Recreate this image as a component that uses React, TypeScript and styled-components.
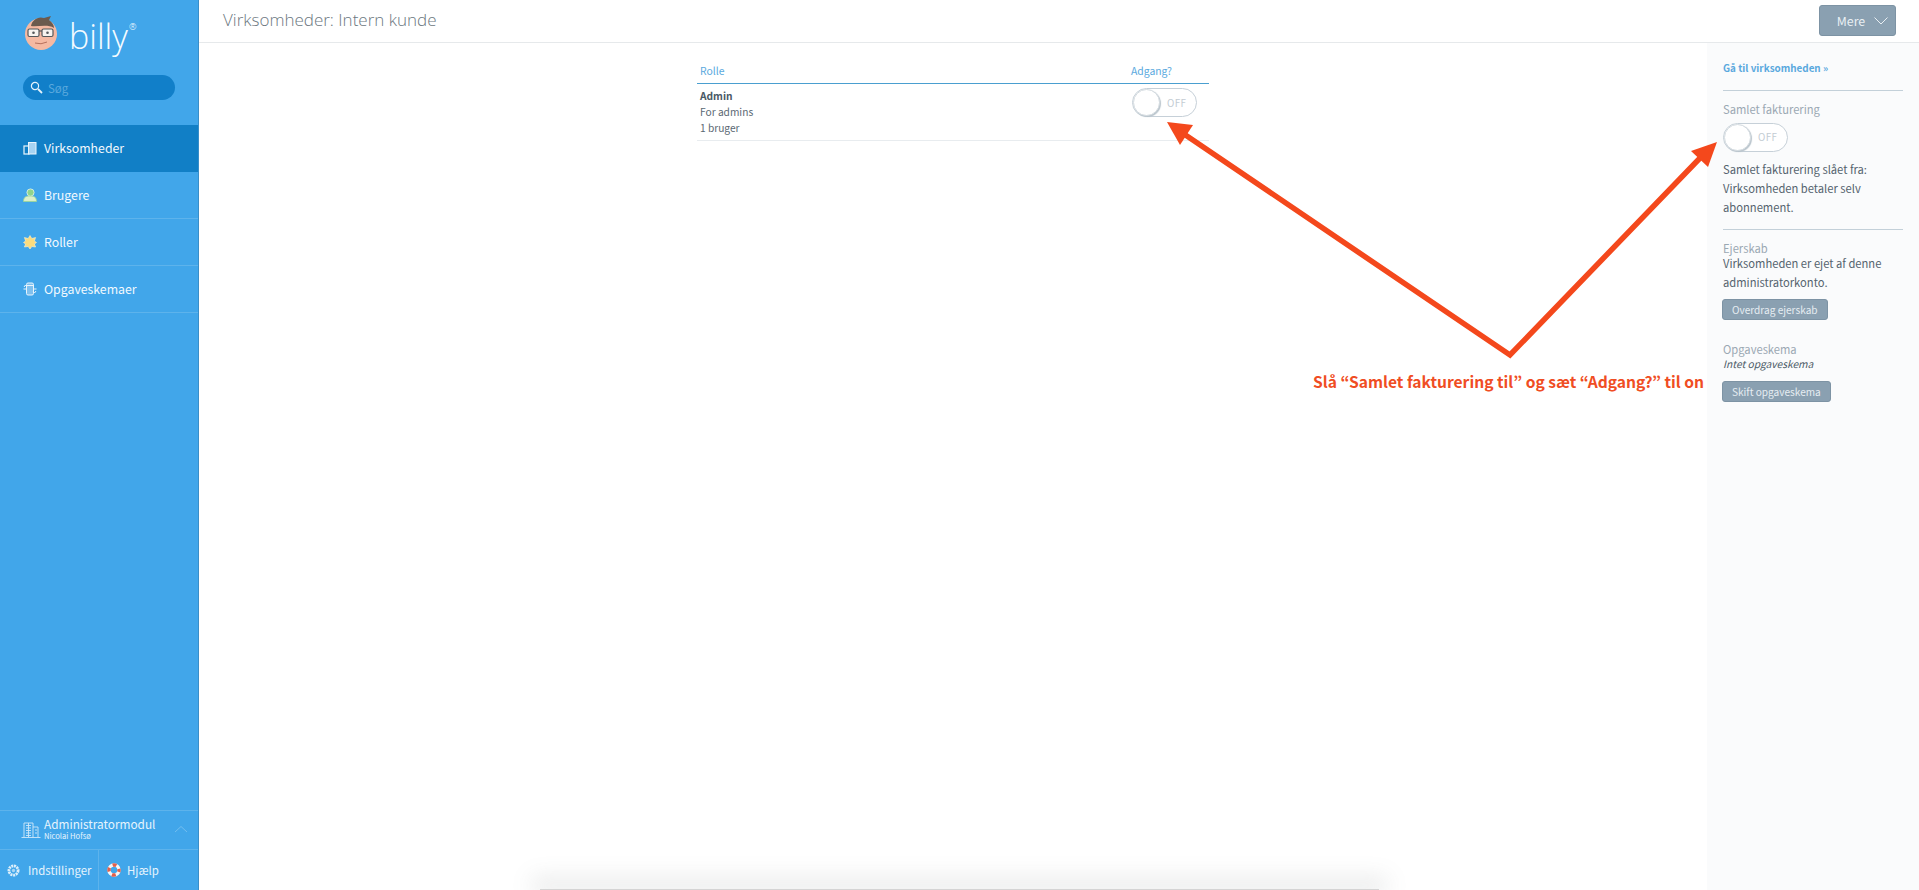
import styled, { createGlobalStyle } from "styled-components";
import { ReactNode } from "react";

const sans = `"Noto Sans CJK JP", "Open Sans", sans-serif`;

const GlobalStyle = createGlobalStyle`
  html, body {
    margin: 0;
    height: 100%;
    background: #fff;
    overflow: hidden;
  }
  body {
    font-family: ${sans};
    color: #4a5a66;
  }
  #root {
    height: 100%;
  }
`;

const Page = styled.div`
  position: relative;
  display: flex;
  height: 890px;
  overflow: hidden;
`;

/* Sidebar */
const Sidebar = styled.aside`
  display: flex;
  flex-direction: column;
  flex: 0 0 199px;
  box-sizing: border-box;
  background: #41a6ea;
  border-right: 1px solid #3a8ec8;
  color: #fff;
`;

const Logo = styled.div`
  display: flex;
  align-items: flex-start;
  height: 75px;
  box-sizing: border-box;
  padding: 15px 0 0 24px;
`;

const LogoText = styled.span`
  font-family: "Open Sans", sans-serif;
  font-weight: 300;
  font-size: 34px;
  line-height: 40px;
  margin-left: 11px;
  margin-top: 1px;
  color: #f4fbff;
`;

const LogoMark = styled.sup`
  font-size: 9px;
  line-height: 9px;
  vertical-align: top;
  position: relative;
  top: 6px;
  margin-left: 1px;
`;

const Search = styled.div`
  display: flex;
  align-items: center;
  gap: 5px;
  height: 25px;
  width: 152px;
  margin-left: 23px;
  box-sizing: border-box;
  padding-left: 7px;
  border-radius: 13px;
  background: #117fc9;
  color: #5aa9dd;
  font-size: 11.5px;
`;

const Nav = styled.nav`
  margin-top: 25px;
`;

const NavItem = styled.a<{ $active?: boolean }>`
  display: flex;
  align-items: center;
  gap: 7px;
  height: 47px;
  box-sizing: border-box;
  padding: 0 0 1px 23px;
  font-size: 12.3px;
  color: #f2f9fe;
  background: ${(p) => (p.$active ? "#117fc6" : "transparent")};
  border-bottom: 1px solid ${(p) => (p.$active ? "#117fc6" : "#5db3ec")};
`;

const NavIcon = styled.svg`
  flex: 0 0 14px;
  width: 14px;
  height: 14px;
`;

const SidebarFoot = styled.div`
  margin-top: auto;
`;

const AdminRow = styled.div`
  display: flex;
  align-items: center;
  height: 39px;
  box-sizing: border-box;
  padding: 0 0 2px 20px;
  border-top: 1px solid #5db3ec;
`;

const AdminText = styled.div`
  margin-left: 2px;
  flex: 1;
`;

const AdminTitle = styled.div`
  font-size: 11.8px;
  line-height: 13px;
  color: #e6f4fd;
`;

const AdminName = styled.div`
  font-size: 7.6px;
  line-height: 11px;
  color: #e6f4fd;
`;

const AdminChevron = styled.svg`
  margin-right: 10px;
`;

const FootLinks = styled.div`
  display: flex;
  height: 41px;
  box-sizing: border-box;
  border-top: 1px solid #5db3ec;
`;

const FootLink = styled.a<{ $wide?: boolean }>`
  display: flex;
  align-items: center;
  gap: ${(p) => (p.$wide ? "8px" : "6px")};
  flex: ${(p) => (p.$wide ? "0 0 99px" : "1")};
  box-sizing: border-box;
  padding-left: ${(p) => (p.$wide ? "7px" : "8px")};
  font-size: 11.4px;
  color: #e6f4fd;
  border-right: ${(p) => (p.$wide ? "1px solid #5db3ec" : "none")};
`;

/* Main */
const Main = styled.main`
  display: flex;
  flex-direction: column;
  flex: 1;
  min-width: 0;
`;

const Header = styled.header`
  display: flex;
  align-items: flex-start;
  justify-content: space-between;
  height: 43px;
  box-sizing: border-box;
  padding: 5px 23px 0 24px;
  border-bottom: 1px solid #e6e9eb;
`;

const Title = styled.h1`
  margin: 0;
  font-family: "Open Sans", sans-serif;
  font-weight: 300;
  font-size: 17px;
  line-height: 30px;
  color: #6b7780;
`;

const MoreButton = styled.button`
  display: flex;
  align-items: center;
  justify-content: center;
  gap: 9px;
  width: 77px;
  height: 31px;
  padding: 0 0 0 10px;
  border: 1px solid #7d93a4;
  border-radius: 3px;
  background: #8aa0b1;
  color: #e9eff3;
  font-family: ${sans};
  font-size: 12.4px;
`;

const Body = styled.div`
  display: flex;
  flex: 1;
  min-height: 0;
`;

const Center = styled.section`
  flex: 1;
  padding-top: 19px;
`;

const RoleTable = styled.div`
  width: 512px;
  margin: 0 auto;
`;

const TableHead = styled.div`
  display: flex;
  justify-content: space-between;
  height: 22px;
  box-sizing: border-box;
  padding: 0 37px 0 3px;
  border-bottom: 1px solid #4a9fd0;
  font-size: 10.4px;
  line-height: 17px;
  color: #5aa9de;
`;

const TableRow = styled.div`
  display: flex;
  justify-content: space-between;
  height: 57px;
  box-sizing: border-box;
  padding: 4px 12px 0 3px;
  border-bottom: 1px solid #e8ecef;
`;

const RoleInfo = styled.div`
  font-size: 10.2px;
  line-height: 16px;
  color: #5a6873;
`;

const RoleName = styled.div`
  font-weight: 700;
  color: #4a5a66;
`;

const ToggleBox = styled.div`
  display: flex;
  align-items: center;
  width: 65px;
  height: 29px;
  box-sizing: border-box;
  border: 1px solid #c6d0d8;
  border-radius: 15px;
  background: #fff;
`;

const ToggleKnob = styled.span`
  flex: 0 0 27px;
  height: 27px;
  box-sizing: border-box;
  border-radius: 50%;
  background: #fff;
  border: 1px solid #d4dbe0;
  box-shadow: 1px 1px 1px #b9c4cc;
`;

const ToggleLabel = styled.span`
  margin-left: 7px;
  font-size: 9.8px;
  letter-spacing: 0.4px;
  color: #c3ccd3;
`;

const Toggle = () => (
  <ToggleBox>
    <ToggleKnob />
    <ToggleLabel>OFF</ToggleLabel>
  </ToggleBox>
);

/* Right panel */
const Panel = styled.aside`
  flex: 0 0 212px;
  box-sizing: border-box;
  padding: 16px 16px 0 16px;
  background: #fafbfc;
  font-size: 11.2px;
  line-height: 19px;
  color: #55636e;
`;

const PanelLink = styled.a`
  display: block;
  font-weight: 700;
  font-size: 9.9px;
  color: #5aa9de;
`;

const Rule = styled.hr`
  margin: 12px 0 11px;
  border: 0;
  border-top: 1px solid #c3d0d9;
`;

const PanelLabel = styled.div`
  font-size: 11.2px;
  line-height: 15px;
  color: #9aa8b3;
`;

const ToggleRow = styled.div`
  margin-top: 6px;
`;

const PanelText = styled.p<{ $offset: number }>`
  margin: ${(p) => p.$offset}px 0 0;
`;

const PanelNote = styled.div`
  font-style: italic;
  font-size: 10.2px;
  line-height: 14px;
  margin-bottom: 10px;
  color: #4a5a66;
`;

const PanelButton = styled.button`
  display: block;
  height: 21px;
  margin: 7px 0 0 -1px;
  padding: 0 9px;
  border: 1px solid #7d93a4;
  border-radius: 3px;
  background: #8aa0b1;
  color: #e6edf2;
  font-family: ${sans};
  font-size: 10.1px;
  line-height: 17px;
`;

const PanelBlock = styled.div<{ $gap?: number }>`
  margin-top: ${(p) => p.$gap ?? 0}px;
`;

/* Annotation laid over the page */
const Annotation = styled.div`
  position: absolute;
  left: 1313px;
  top: 369px;
  font-size: 15.6px;
  line-height: 24px;
  font-weight: 700;
  color: #f04d23;
  white-space: nowrap;
`;

const Arrows = styled.svg`
  position: absolute;
  left: 0;
  top: 0;
  width: 1919px;
  height: 890px;
  pointer-events: none;
`;

const WindowShadow = styled.div`
  position: absolute;
  left: 540px;
  bottom: 0;
  width: 839px;
  height: 1px;
  background: #d4d4d4;
  box-shadow: 0 -4px 22px 8px rgba(120, 125, 125, 0.16);
`;

const Icon = ({ children }: { children: ReactNode }) => (
  <NavIcon viewBox="0 0 14 14">{children}</NavIcon>
);

const Face = () => (
  <svg width="34" height="35" viewBox="0 0 34 35">
    <circle cx="17" cy="19" r="16" fill="#f5b9a2" />
    <path
      d="M7 11 C8 5 14 1 20 3 L27 1 L25 5 C28 7 30 10 30 13 C24 9 14 12 7 11 Z"
      fill="#6b5a4e"
    />
    <rect x="4" y="14" width="11" height="7.5" rx="1.5" fill="#f7f3ef" stroke="#55585a" strokeWidth="1.2" />
    <rect x="18" y="14" width="11" height="7.5" rx="1.5" fill="#f7f3ef" stroke="#55585a" strokeWidth="1.2" />
    <path d="M15 16 H18" stroke="#55585a" strokeWidth="1.2" />
    <circle cx="9.5" cy="17.8" r="1.3" fill="#55585a" />
    <circle cx="23.5" cy="17.8" r="1.3" fill="#55585a" />
    <path d="M11 28 Q17 30 23 27" stroke="#b7705c" strokeWidth="1" fill="none" />
  </svg>
);

const App = () => (
  <Page>
    <GlobalStyle />
    <Sidebar>
      <Logo>
        <Face />
        <LogoText>
          billy<LogoMark>®</LogoMark>
        </LogoText>
      </Logo>
      <Search>
        <svg width="13" height="13" viewBox="0 0 13 13">
          <circle cx="5" cy="5" r="3.6" fill="none" stroke="#e4f2fb" strokeWidth="1.2" />
          <path d="M8 8 L12 12" stroke="#e4f2fb" strokeWidth="1.8" />
        </svg>
        Søg
      </Search>
      <Nav>
        <NavItem $active>
          <Icon>
            <rect x="1" y="5" width="5" height="8" fill="none" stroke="#eaf5fc" strokeWidth="1.2" />
            <rect x="5.5" y="1.5" width="7.5" height="11.5" fill="#a6d3f2" stroke="#eaf5fc" strokeWidth="1" />
          </Icon>
          Virksomheder
        </NavItem>
        <NavItem>
          <Icon>
            <circle cx="7.5" cy="4.5" r="3.6" fill="#8fd48c" stroke="#e8f6e6" strokeWidth="0.8" />
            <path d="M0.5 13.5 C0.5 9 3 8 7 8 C11 8 13.5 9 13.5 13.5 Z" fill="#dcefc8" stroke="#9ad596" strokeWidth="0.8" />
          </Icon>
          Brugere
        </NavItem>
        <NavItem>
          <Icon>
            <path
              d="M7 0.5 L8.8 3.5 L12.6 2.5 L11.4 6 L13.5 7.5 L11.4 9 L12.6 12 L8.8 11.5 L7 14 L5.2 11.5 L1.4 12 L2.6 9 L0.5 7.5 L2.6 6 L1.4 2.5 L5.2 3.5 Z"
              fill="#fbdc7e"
              stroke="#fdf3d0"
              strokeWidth="0.6"
            />
          </Icon>
          Roller
        </NavItem>
        <NavItem>
          <Icon>
            <rect x="3.5" y="1" width="7" height="12" rx="1.5" fill="#7fc0ee" stroke="#e8f4fc" strokeWidth="1" />
            <path d="M0.5 7 H4 M10 7 H13.5 M1 5 L2.5 3 L4 5 M10 9 L11.5 11 L13 9 M4 3.5 H10" stroke="#e8f4fc" strokeWidth="1" fill="none" />
          </Icon>
          Opgaveskemaer
        </NavItem>
      </Nav>
      <SidebarFoot>
        <AdminRow>
          <svg width="22" height="20" viewBox="0 0 20 20">
            <path
              d="M3 18 V4 H12 V18 M12 8 H17 V18 M0.5 18.5 H19.5 M5 6.5 H10 M5 9 H10 M5 11.5 H10 M5 14 H10 M5 16.5 H10 M7.5 4 V18 M14 11 H16 M14 14 H16"
              fill="none"
              stroke="#cfe8f9"
              strokeWidth="0.9"
            />
          </svg>
          <AdminText>
            <AdminTitle>Administratormodul</AdminTitle>
            <AdminName>Nicolai Hofsø</AdminName>
          </AdminText>
          <AdminChevron width="14" height="8" viewBox="0 0 14 8">
            <path d="M1 7 L7 1.5 L13 7" fill="none" stroke="#72bef0" strokeWidth="1" />
          </AdminChevron>
        </AdminRow>
        <FootLinks>
          <FootLink $wide>
            <svg width="13" height="13" viewBox="0 0 13 13">
              <circle cx="6.5" cy="6.5" r="4.6" fill="none" stroke="#dceffb" strokeWidth="2.8" strokeDasharray="2 0.7" />
              <circle cx="6.5" cy="6.5" r="1.7" fill="#a9d6f4" />
            </svg>
            Indstillinger
          </FootLink>
          <FootLink>
            <svg width="14" height="14" viewBox="0 0 14 14">
              <circle cx="7" cy="7" r="5" fill="none" stroke="#f6f6f6" strokeWidth="3.4" />
              <circle
                cx="7"
                cy="7"
                r="5"
                fill="none"
                stroke="#e2604c"
                strokeWidth="3.4"
                strokeDasharray="3.9 3.95"
                strokeDashoffset="2"
              />
            </svg>
            Hjælp
          </FootLink>
        </FootLinks>
      </SidebarFoot>
    </Sidebar>
    <Main>
      <Header>
        <Title>Virksomheder: Intern kunde</Title>
        <MoreButton>
          Mere
          <svg width="14" height="8" viewBox="0 0 14 8">
            <path d="M0.5 0.5 L7 7 L13.5 0.5" fill="none" stroke="#e9eff3" strokeWidth="1" />
          </svg>
        </MoreButton>
      </Header>
      <Body>
        <Center>
          <RoleTable>
            <TableHead>
              <span>Rolle</span>
              <span>Adgang?</span>
            </TableHead>
            <TableRow>
              <RoleInfo>
                <RoleName>Admin</RoleName>
                <div>For admins</div>
                <div>1 bruger</div>
              </RoleInfo>
              <Toggle />
            </TableRow>
          </RoleTable>
        </Center>
        <Panel>
          <PanelLink>Gå til virksomheden »</PanelLink>
          <Rule />
          <PanelLabel>Samlet fakturering</PanelLabel>
          <ToggleRow>
            <Toggle />
          </ToggleRow>
          <PanelText $offset={8}>
            Samlet fakturering slået fra:
            <br />
            Virksomheden betaler selv
            <br />
            abonnement.
          </PanelText>
          <Rule />
          <PanelBlock>
            <PanelLabel>Ejerskab</PanelLabel>
            <PanelText $offset={-2}>
              Virksomheden er ejet af denne
              <br />
              administratorkonto.
            </PanelText>
            <PanelButton>Overdrag ejerskab</PanelButton>
          </PanelBlock>
          <PanelBlock $gap={22}>
            <PanelLabel>Opgaveskema</PanelLabel>
            <PanelNote>Intet opgaveskema</PanelNote>
            <PanelButton>Skift opgaveskema</PanelButton>
          </PanelBlock>
        </Panel>
      </Body>
    </Main>
    <Annotation>Slå “Samlet fakturering til” og sæt “Adgang?” til on</Annotation>
    <Arrows viewBox="0 0 1919 890">
      <path d="M1184 134 L1510 355 L1701 157" fill="none" stroke="#f4481c" strokeWidth="5.5" />
      <path d="M1167 122 L1193 125 L1180 145 Z" fill="#f4481c" />
      <path d="M1717 142 L1691 151 L1708 167 Z" fill="#f4481c" />
    </Arrows>
    <WindowShadow />
  </Page>
);

export default App;
